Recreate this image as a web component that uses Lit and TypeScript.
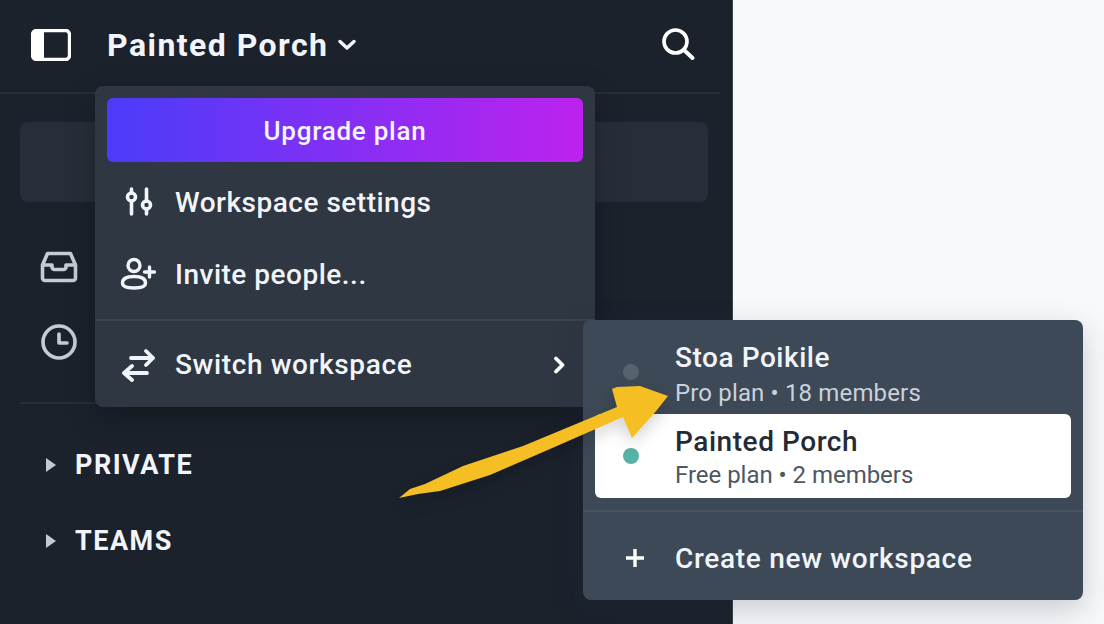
import { LitElement, html, css, svg } from "lit";
import { customElement } from "lit/decorators.js";

@customElement("app-root")
export class AppRoot extends LitElement {
  static styles = css`
    :host { display: block; width: 1104px; height: 624px; overflow: hidden; position: relative; background: #f8f9fb; font-family: Roboto, sans-serif; -webkit-font-smoothing: antialiased; }
    svg { display: block; flex: none; }
    .side { width: 733px; height: 624px; background: #1b222c; box-sizing: border-box; padding-right: 12px; border-right: 1px solid #3a424d; }
    .head { box-sizing: border-box; border-bottom: 2px solid #262e39; height: 94px; display: flex; align-items: center; padding: 0 0 3px 31px; color: #f1f4f9; }
    .title { font-size: 32px; font-weight: 700; letter-spacing: 1.45px; margin-left: 36px; line-height: 40px; }
    .chev { margin-left: 10px; }
    .search { margin-left: auto; margin-right: 25px; margin-top: -1px; }
    .card { height: 80px; margin: 28px 12px 0 20px; background: #272e39; border-radius: 8px; }
    .navs { margin-left: 40px; padding-top: 49px; display: flex; flex-direction: column; gap: 41px; height: 200px; box-sizing: border-box; }
    .rule { height: 2px; background: #262e39; margin-left: 20px; }
    .sect { display: flex; align-items: center; height: 76px; gap: 19px; margin-left: 46px; color: #f1f4f9; font-size: 27px; font-weight: 700; letter-spacing: 1.5px; }
    .sects { padding-top: 23px; }
    .menu { position: absolute; left: 95px; top: 86px; width: 500px; height: 321px; background: #2e3742; border-radius: 8px; box-shadow: 0 10px 30px rgba(0,0,0,.25); box-sizing: border-box; padding-top: 12px; color: #f1f4f9; }
    .upgrade { margin: 0 12px; height: 64px; border-radius: 6px; background: linear-gradient(90deg, #4b3cfa, #bd22ee); display: flex; align-items: center; justify-content: center; font-size: 26px; font-weight: 500; letter-spacing: .75px; padding-top: 1px; box-sizing: border-box; }
    .item { display: flex; align-items: center; height: 72px; padding-left: 24px; font-size: 28px; font-weight: 500; letter-spacing: .5px; padding-bottom: 2px; box-sizing: border-box; }
    .iconbox { width: 56px; display: flex; flex: none; }
    .menu hr, .sub hr { border: 0; height: 2px; margin: 0; }
    .menu hr { background: #3a4450; margin-top: 8px; }
    .item.sw { height: 87px; padding-right: 30px; padding-bottom: 0; letter-spacing: .62px; }
    .item.sw .gt { margin-left: auto; }
    .sub { position: absolute; left: 583px; top: 320px; width: 500px; height: 280px; background: #3d4956; border-radius: 8px; box-shadow: 0 10px 30px rgba(30,40,60,.22); box-sizing: border-box; padding: 10px 12px 0; color: #f1f4f9; }
    .ws { display: flex; align-items: center; height: 84px; border-radius: 6px; box-sizing: border-box; }
    .ws.first .text { padding-top: 4px; }
    .ws.on .text { padding-top: 2px; }
    .dot { width: 16px; height: 16px; border-radius: 50%; margin-left: 28px; margin-right: 36px; flex: none; }
    .nm { font-size: 28px; font-weight: 500; letter-spacing: .55px; line-height: 38px; }
    .pl { font-size: 24px; letter-spacing: .15px; line-height: 32px; color: #c9d2dd; }
    .ws.on { background: #fff; color: #232b36; }
    .ws.on .pl { color: #4c5764; margin-top: -2px; letter-spacing: -.03px; }
    .sub hr { background: #465361; margin: 12px -12px 0; }
    .create { display: flex; align-items: center; height: 92px; font-size: 28px; font-weight: 500; letter-spacing: .7px; padding-left: 30px; }
    .create svg { margin-right: 30px; }
    .arrow { position: absolute; left: 395px; top: 380px; filter: drop-shadow(0 6px 8px rgba(0,0,0,.18)); }
  `;

  render() {
    const stroke = "#f1f4f9";
    return html`
      <div class="side">
        <div class="head">
          <svg width="40" height="32" viewBox="0 0 40 32"><rect x="1.5" y="1.5" width="37" height="29" rx="4" fill="none" stroke="#fff" stroke-width="3.400"/><path d="M5 1.500h8v29H5a3.500 3.500 0 0 1-3.500-3.500V5A3.500 3.500 0 0 1 5 1.500z" fill="#fff"/></svg>
          <span class="title">Painted Porch</span>
          <svg class="chev" width="18" height="12" viewBox="0 0 18 12"><path d="M2 2.500l7 6.500 7-6.500" fill="none" stroke="${stroke}" stroke-width="3.400" stroke-linecap="round" stroke-linejoin="round"/></svg>
          <svg class="search" width="34" height="34" viewBox="0 0 34 34"><circle cx="14.500" cy="14.500" r="11.500" fill="none" stroke="#fff" stroke-width="3.600"/><path d="M23 23l8.500 8" stroke="#fff" stroke-width="4" stroke-linecap="round"/></svg>
        </div>
        <div class="card"></div>
        <div class="navs">
          <svg width="38" height="32" viewBox="0 0 38 32" fill="none" stroke="#c6cbd4" stroke-width="3.600" stroke-linejoin="round"><path d="M2.500 14L7.500 2.500h23L35.500 14v13a2.500 2.500 0 0 1-2.500 2.500H5A2.500 2.500 0 0 1 2.500 27z"/><path d="M3 14h9v2a2.500 2.500 0 0 0 2.500 2.500h9A2.500 2.500 0 0 0 26 16v-2h9"/></svg>
          <svg width="38" height="36" viewBox="0 0 38 36" fill="none" stroke="#c6cbd4" stroke-width="3.600" stroke-linecap="round" stroke-linejoin="round"><circle cx="19" cy="18" r="16"/><path d="M19 10v9h8"/></svg>
        </div>
        <div class="rule"></div>
        <div class="sects">
          <div class="sect"><svg width="10" height="14" viewBox="0 0 10 14"><path d="M0 0l10 7-10 7z" fill="#c4cad4"/></svg>PRIVATE</div>
          <div class="sect"><svg width="10" height="14" viewBox="0 0 10 14"><path d="M0 0l10 7-10 7z" fill="#c4cad4"/></svg>TEAMS</div>
        </div>
      </div>

      <div class="menu">
        <div class="upgrade">Upgrade plan</div>
        <div class="item" style="margin-top:5px">
          <span class="iconbox"><svg width="36" height="30" viewBox="0 0 36 30" fill="none" stroke="${stroke}" stroke-width="3.600" stroke-linecap="round"><circle cx="12.500" cy="10" r="4"/><path d="M12.500 14v13M12.500 2v4"/><circle cx="27.500" cy="18" r="4"/><path d="M27.500 2v12M27.500 22v5"/></svg></span>Workspace settings
        </div>
        <div class="item">
          <span class="iconbox"><svg width="38" height="34" viewBox="0 0 38 34" fill="none" stroke="${stroke}" stroke-width="3.400" stroke-linecap="round"><circle cx="15" cy="8.500" r="6"/><path d="M3.500 26c0-5 5-6.500 11.500-6.500s11.500 1.500 11.500 6.500c0 3.500-4 5-11.500 5S3.500 29.500 3.500 26z"/><path d="M30.500 10v10M25.500 15h10"/></svg></span>Invite people...
        </div>
        <hr />
        <div class="item sw">
          <span class="iconbox"><svg width="36" height="34" viewBox="0 0 36 34" fill="none" stroke="${stroke}" stroke-width="3.800" stroke-linecap="round" stroke-linejoin="round"><path d="M12 10h22M27 3l7 7-7 7"/><path d="M28 25H6M13 18l-8 7 8 7"/></svg></span>Switch workspace
          <svg class="gt" width="12" height="18" viewBox="0 0 12 18"><path d="M3 2.500l6.500 6.500L3 15.500" fill="none" stroke="#fff" stroke-width="3.800" stroke-linecap="round" stroke-linejoin="round"/></svg>
        </div>
      </div>

      <div class="sub">
        <div class="ws first">
          <span class="dot" style="background:#566270"></span>
          <div class="text"><div class="nm">Stoa Poikile</div><div class="pl">Pro plan • 18 members</div></div>
        </div>
        <div class="ws on">
          <span class="dot" style="background:#57b3a5"></span>
          <div class="text"><div class="nm">Painted Porch</div><div class="pl">Free plan • 2 members</div></div>
        </div>
        <hr />
        <div class="create">
          <svg width="20" height="20" viewBox="0 0 20 20"><path d="M10 1v18M1 10h18" stroke="#fff" stroke-width="3.400"/></svg>Create new workspace
        </div>
      </div>

      <svg class="arrow" width="280" height="125" viewBox="395 380 280 125">
        ${svg`<path d="M399 498 L410 489 L425 484 L463 466 L523 446 L617 407 L612 389 L617 387 L640 386 L668 396 L657 410 L632 438 L623 417 L550 449 L490 475 L440 491 L418 494 Z" fill="#f5bf23"/>`}
      </svg>
    `;
  }
}
